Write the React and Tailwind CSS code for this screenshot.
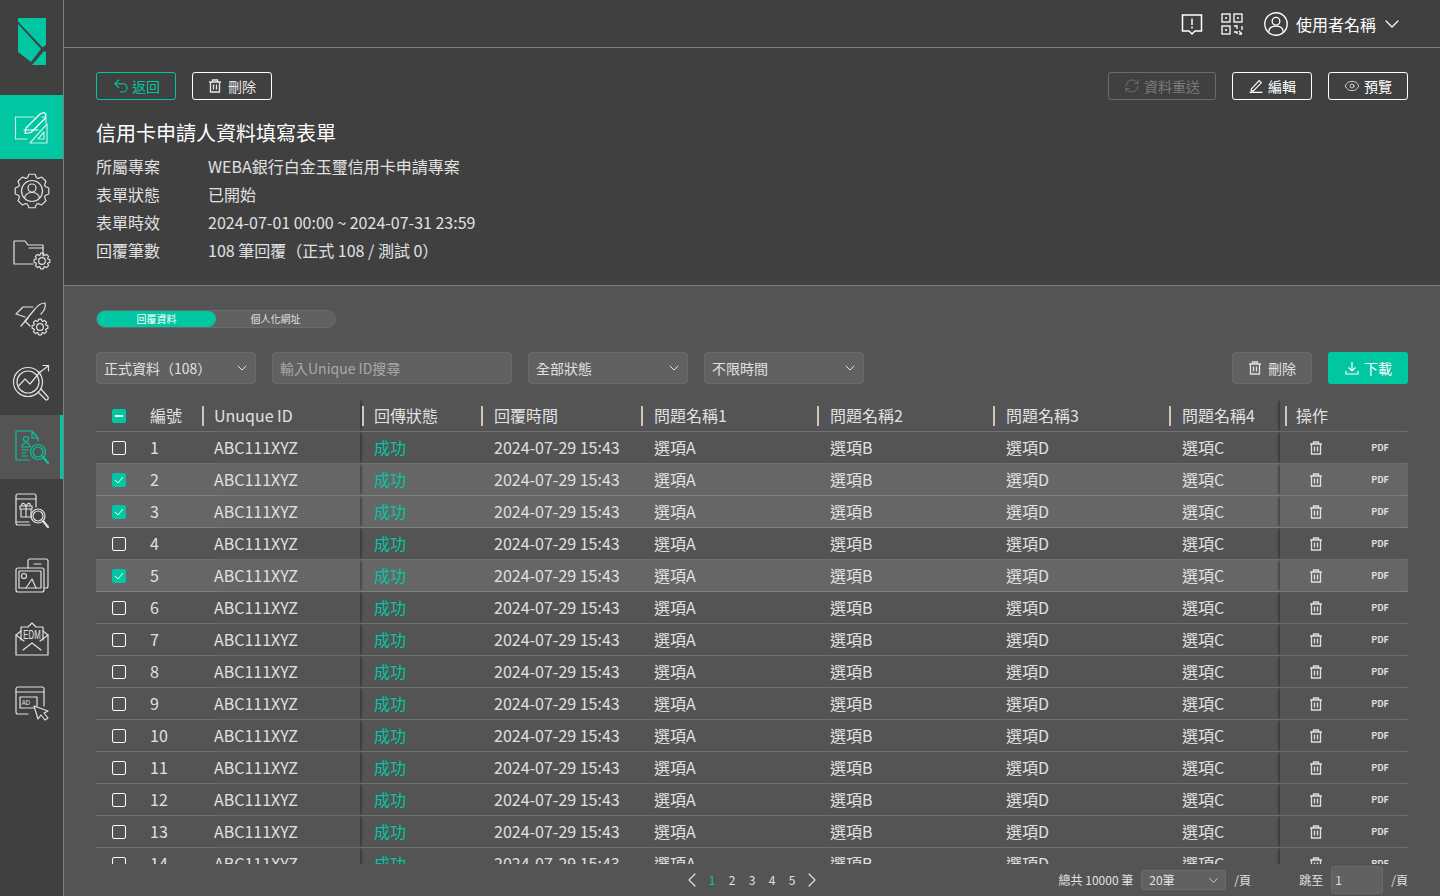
import React from 'react';
import { ChevronDown, ChevronLeft, ChevronRight, Eye, RefreshCw, Undo2 } from 'lucide-react';

const gearPath = (cx, cy, r1, r2, teeth) => {
  const pts = [];
  const step = (Math.PI * 2) / teeth;
  for (let i = 0; i < teeth; i++) {
    const a = i * step - Math.PI / 2;
    [[-0.3, r2], [-0.16, r1], [0.16, r1], [0.3, r2]].forEach(([o, r]) => {
      pts.push(`${(cx + Math.cos(a + o * step * 1.4) * r).toFixed(2)} ${(cy + Math.sin(a + o * step * 1.4) * r).toFixed(2)}`);
    });
  }
  return `M${pts.join('L')}Z`;
};

const Gear = ({ x, y, r }) => (
  <>
    <path d={gearPath(x, y, r, r * 0.78, 8)} />
    <circle cx={x} cy={y} r={r * 0.42} />
  </>
);

const navIcons = [
  <>
    <path d="M34 22H15.5V44H27M46 28V22H42" opacity=".75" />
    <path d="M24 35H38" />
    <path d="M26 33l14-14 4-1.5 2 2-1 4-14 14-6 1z" />
    <path d="M30 48 47 29V48Z" opacity=".75" />
    <path d="M38 44 44 37V44Z" opacity=".75" />
  </>,
  <>
    <path d={gearPath(32, 32, 17, 14, 8)} />
    <circle cx="32" cy="32" r="10.5" />
    <circle cx="32" cy="29" r="4" />
    <path d="M24.5 39c1-4 4-5.5 7.5-5.500s6.500 1.500 7.500 5.500" />
  </>,
  <>
    <path d="M33 41H14V18H25L28 22H43V33" />
    <path d="M29 25H43" />
    <Gear x={42} y={38} r={8} />
  </>,
  <>
    <path d="M30 39 25 34 35 22C38 18 42 16 45 16 46 20 44 24 41 27" />
    <path d="M33 20H23L16 27 25 30" />
    <path d="M21 39 28 31" />
    <Gear x={40} y={40} r={8} />
  </>,
  <>
    <circle cx="28" cy="31" r="14.500" />
    <circle cx="28" cy="31" r="11" />
    <path d="M18.500 35 25 28 30 33 40 21" />
    <path d="M38 41 46 49a2 2 0 0 0 2-3L41 38" />
    <path d="M39 22 48 15M43 14.500H48.500V20" />
  </>,
  <>
    <path d="M29 45H16V16H32L38 23V26M32 16V23H38" />
    <circle cx="26" cy="24" r="2.500" />
    <path d="M22 32c0-3 2-4 4-4s4 1 4 4z" />
    <path d="M22 35H28M22 38H26M22 41H27" />
    <circle cx="38" cy="37" r="7.500" />
    <circle cx="38" cy="37" r="5" />
    <path d="M43 42 48 48" strokeWidth="2.200" />
  </>,
  <>
    <path d="M30 46H18a2 2 0 0 1-2-2V17a2 2 0 0 1 2-2H34a2 2 0 0 1 2 2V28" />
    <path d="M16 20H36M16 43H29" />
    <path d="M21 30H31V38H21ZM20 27H32V30H20ZM26 27V38M26 27C24 23 21 24 22 27M26 27C28 23 31 24 30 27" />
    <circle cx="38" cy="37" r="7" />
    <circle cx="38" cy="37" r="5" />
    <path d="M43 42 48 48" strokeWidth="2.200" />
  </>,
  <>
    <path d="M28 25V18a2 2 0 0 1 2-2H46a2 2 0 0 1 2 2V43a2 2 0 0 1-2 2H44" />
    <path d="M34 21H41" />
    <rect x="16" y="25" width="28" height="24" rx="2" />
    <rect x="19" y="28" width="22" height="17" />
    <circle cx="24" cy="33" r="2.500" />
    <path d="M26 45 32 36 36 45" />
  </>,
  <>
    <path d="M16 28V48H48V28L43 24M21 24 16 28" />
    <path d="M16 28 24 34M48 28 40 34M23 43 32 36 41 43" />
    <path d="M21 33V20H28L32 16 36 20H43V33" />
    <text x="32" y="32.500" textAnchor="middle" fontSize="12" stroke="none" fill="currentColor" transform="translate(11.200 0) scale(.65 1)" style={{ fontFamily: '"Liberation Sans", sans-serif' }}>EDM</text>
  </>,
  <>
    <path d="M28 43H18a2 2 0 0 1-2-2V18a2 2 0 0 1 2-2H42a2 2 0 0 1 2 2V35" />
    <path d="M16 21H44" />
    <rect x="20" y="26" width="17" height="11" />
    <text x="26" y="34.500" textAnchor="middle" fontSize="8" stroke="none" fill="currentColor" transform="translate(6.500 0) scale(.75 1)" style={{ fontFamily: '"Liberation Sans", sans-serif' }}>AD</text>
    <path d="M34 35 48 40 44 42 48 47 45 49 41 44 38 48Z" fill="#404040" />
  </>,
];

const Trash = ({ size = 14 }) => (
  <svg width={size} height={size} viewBox="0 0 14 14" fill="none" stroke="currentColor" strokeWidth="1.300">
    <path d="M1 3H13M4.500 3V1H9.500V3M2.500 3V13H11.500V3M5.500 5.500V10.500M8.500 5.500V10.500" />
  </svg>
);

const Btn = ({ className, children }) => (
  <div className={`h-7 flex items-center justify-center rounded-[3px] border text-sm ${className}`}>{children}</div>
);

const Select = ({ label, className }) => (
  <div className={`h-8 flex items-center justify-between pl-[7px] pr-[5px] rounded-[3px] border border-[#6b6b6b] bg-[#616161] text-sm text-[#e0e0e0] ${className}`}>
    <span>{label}</span>
    <ChevronDown size={16} strokeWidth={1.5} />
  </div>
);

const gridCols = 'grid grid-cols-[54px_64px_146px_134px_160px_176px_176px_176px_98px_128px] items-center';

const headers = ['編號', 'Unuque ID', '回傳狀態', '回覆時間', '問題名稱1', '問題名稱2', '問題名稱3', '問題名稱4', '操作'];
const rows = Array.from({ length: 14 }, (_, i) => i + 1);
const selected = [2, 3, 5];

export default function App() {
  return (
    <div className="flex h-[896px] w-[1440px] overflow-hidden bg-[#545454] text-[#e0e0e0]" style={{ fontFamily: '"Noto Sans CJK TC", "Noto Sans", sans-serif' }}>
      <aside className="w-16 shrink-0 bg-[#404040] border-r border-[#808080]">
        <div className="h-[95px]">
          <svg width="63" height="95" viewBox="0 0 63 95" fill="#00c7a2">
            <path d="M18 18H46V45L42.500 47.500 18 21.500Z" />
            <path d="M18 24 41 49 31 62 18 52Z" />
            <path d="M44 51 46 52V65H32Z" />
          </svg>
        </div>
        {navIcons.map((icon, i) => (
          <div
            key={i}
            className={`relative h-16 ${i === 0 ? 'bg-[#00c7a2] text-white' : i === 5 ? 'bg-[#545454] text-[#00c7a2]' : 'text-[#e0e0e0]'}`}
          >
            <svg width="64" height="64" viewBox="0 0 64 64" fill="none" stroke="currentColor" strokeWidth="1.200" strokeLinejoin="round" strokeLinecap="round">
              {icon}
            </svg>
            {i === 5 && <div className="absolute right-0 top-0 bottom-0 w-[3px] bg-[#00c7a2]" />}
          </div>
        ))}
      </aside>

      <main className="flex-1 flex flex-col min-w-0">
        <header className="h-12 shrink-0 bg-[#404040] border-b border-[#808080] flex items-center justify-end pr-9">
          <svg width="22" height="24" viewBox="0 0 22 24" fill="none" stroke="white" strokeWidth="1.500" className="mr-[18px]">
            <path d="M1.500 3H20.500V19H14L11 22 8 19H1.500Z" />
            <path d="M11 6.500V13M11 14.500V16.500" />
          </svg>
          <svg width="22" height="22" viewBox="0 0 22 22" fill="none" stroke="white" strokeWidth="1.300" className="mr-[21px]">
            <rect x="1" y="1" width="8" height="8" />
            <rect x="13" y="1" width="8" height="8" />
            <rect x="1" y="13" width="8" height="8" />
            <path d="M4 5H6M16 5H18M4 17H6M13 13H16V16M21 13V17M13 19H16V21M18 18 21 21M18 21H21" />
          </svg>
          <svg width="24" height="24" viewBox="0 0 22 22" fill="none" stroke="white" strokeWidth="1.200" className="mr-[8px]">
            <circle cx="11" cy="11" r="10.300" />
            <circle cx="11" cy="8.500" r="3.500" />
            <path d="M4.500 18c0-3.500 2.500-5 6.500-5s6.500 1.500 6.500 5" />
          </svg>
          <span className="text-base text-white">使用者名稱</span>
          <ChevronDown size={24} strokeWidth={1.2} className="ml-1 text-white" />
        </header>

        <section className="h-[238px] shrink-0 bg-[#404040] border-b border-[#808080] pt-6 px-8">
          <div className="flex gap-4">
            <Btn className="w-20 gap-0.5 border-[#00c7a2] text-[#00c7a2]"><Undo2 size={18} strokeWidth={1.5} />返回</Btn>
            <Btn className="w-20 gap-1.5 border-white text-[#e6e6e6]"><Trash />刪除</Btn>
            <div className="flex-1" />
            <Btn className="w-[108px] gap-1 border-[#6b6b6b] text-[#7a7a7a]"><RefreshCw size={16} strokeWidth={1.2} />資料重送</Btn>
            <Btn className="w-20 gap-1 border-white text-white">
              <svg width="16" height="16" viewBox="0 0 15 15" fill="none" stroke="currentColor" strokeWidth="1.100"><path d="M1.500 13.500H13.500M3 10.500 10.500 2.500 12.500 4.500 5 12H3Z" /></svg>
              編輯
            </Btn>
            <Btn className="w-20 gap-1 border-white text-white"><Eye size={16} strokeWidth={1.1} />預覽</Btn>
          </div>
          <h1 className="mt-[19px] text-xl leading-7 font-normal text-white">信用卡申請人資料填寫表單</h1>
          <dl className="mt-[5px] text-base leading-7">
            {[
              ['所屬專案', 'WEBA銀行白金玉璽信用卡申請專案'],
              ['表單狀態', '已開始'],
              ['表單時效', '2024-07-01 00:00 ~ 2024-07-31 23:59'],
              ['回覆筆數', '108 筆回覆（正式 108 / 測試 0）'],
            ].map(([k, v]) => (
              <div key={k} className="flex">
                <dt className="w-28">{k}</dt>
                <dd>{v}</dd>
              </div>
            ))}
          </dl>
        </section>

        <section className="flex-1 min-h-0 flex flex-col px-8 pt-6">
          <div className="flex h-[18px] w-60 shrink-0 rounded-full bg-[#616161] border border-[#6b6b6b] text-[10px] leading-none">
            <div className="w-[119px] rounded-full bg-[#00c7a2] flex items-center justify-center text-white">回覆資料</div>
            <div className="flex-1 flex items-center justify-center">個人化網址</div>
          </div>

          <div className="mt-6 flex shrink-0 gap-4">
            <Select label="正式資料（108）" className="w-40" />
            <div className="h-8 w-60 flex items-center pl-[7px] rounded-[3px] border border-[#6b6b6b] bg-[#616161] text-sm text-[#a8a8a8]">輸入Unique ID搜尋</div>
            <Select label="全部狀態" className="w-40" />
            <Select label="不限時間" className="w-40" />
            <div className="flex-1" />
            <div className="h-8 w-20 flex items-center justify-center gap-1.5 rounded-[3px] border border-[#6b6b6b] bg-[#616161] text-sm"><Trash />刪除</div>
            <div className="h-8 w-20 flex items-center justify-center gap-1 rounded-[3px] bg-[#00c7a2] text-sm text-white">
              <svg width="16" height="16" viewBox="0 0 16 16" fill="none" stroke="currentColor" strokeWidth="1.200"><path d="M8 2V10.500M4.500 7.500 8 11 11.500 7.500M2 11V14H14V11" /></svg>
              下載
            </div>
          </div>

          <div className="mt-4 flex-1 min-h-0 overflow-hidden text-base leading-[22px]">
            <div className={`${gridCols} h-8 border-b border-[#707070]`}>
              <div className="pl-4">
                <div className="w-3.5 h-3.5 rounded-[2px] bg-[#00c7a2] flex items-center justify-center"><div className="w-2 h-0.5 bg-white" /></div>
              </div>
              {headers.map((h, i) => (
                <div
                  key={h}
                  className={`relative h-full pb-0.5 flex items-center ${i === 1 ? 'shadow-[3px_0_2px_-1px_rgba(0,0,0,0.3)]' : ''} ${i === 8 ? 'pl-4 shadow-[-3px_0_2px_-1px_rgba(0,0,0,0.3)]' : ''} ${i === 2 ? 'pl-[14px]' : ''}`}
                >
                  {h}
                  {i === 0 && <span className="absolute top-[6px] right-[10px] w-[2px] h-5 bg-[#c8c8c8]" />}
                  {i >= 2 && i < 7 && <span className="absolute top-[6px] right-[11px] w-[2px] h-5 bg-[#c8c8c8]" />}
                  {i === 2 && <span className="absolute top-[6px] left-[2px] w-[2px] h-5 bg-[#c8c8c8]" />}
                  {i === 8 && <span className="absolute top-[6px] left-[5px] w-[2px] h-5 bg-[#c8c8c8]" />}
                </div>
              ))}
            </div>
            {rows.map((n) => {
              const on = selected.includes(n);
              return (
                <div key={n} className={`${gridCols} h-8 border-b ${on ? 'bg-[#666666] border-[#808080]' : 'border-[#707070]'}`}>
                  <div className="pl-4">
                    {on ? (
                      <div className="w-3.5 h-3.5 rounded-[2px] bg-[#00c7a2] flex items-center justify-center">
                        <svg width="10" height="10" viewBox="0 0 10 10" fill="none" stroke="white" strokeWidth="1"><path d="M1 5 4 8 9 2" /></svg>
                      </div>
                    ) : (
                      <div className="w-3.5 h-3.5 rounded-[2px] border border-white" />
                    )}
                  </div>
                  <div className="mb-0.5">{n}</div>
                  <div className="h-full pb-0.5 flex items-center shadow-[3px_0_2px_-1px_rgba(0,0,0,0.3)]">ABC111XYZ</div>
                  <div className="mb-0.5 pl-[14px] text-[#00c7a2]">成功</div>
                  <div className="mb-0.5">2024-07-29 15:43</div>
                  <div className="mb-0.5">選項A</div>
                  <div className="mb-0.5">選項B</div>
                  <div className="mb-0.5">選項D</div>
                  <div className="mb-0.5">選項C</div>
                  <div className="h-full flex items-center pl-4 shadow-[-3px_0_2px_-1px_rgba(0,0,0,0.3)]">
                    <span className="w-10 flex justify-center"><Trash size={14} /></span>
                    <span className="ml-6 w-10 text-center text-[9px] font-bold leading-none">PDF</span>
                  </div>
                </div>
              );
            })}
          </div>

          <footer className="h-8 shrink-0 flex items-center text-xs relative">
            <div className="flex items-center ml-[584px] w-[144px]">
              <ChevronLeft size={24} strokeWidth={1.2} className="-mr-0.5" />
              <span className="w-5 text-center text-[#00c7a2]">1</span>
              <span className="w-5 text-center">2</span>
              <span className="w-5 text-center">3</span>
              <span className="w-5 text-center">4</span>
              <span className="w-5 text-center">5</span>
              <ChevronRight size={24} strokeWidth={1.2} className="-ml-0.5" />
            </div>
            <div className="flex-1" />
            <span>總共 10000 筆</span>
            <div className="ml-2 h-5 w-[85px] flex items-center justify-between pl-[7px] pr-1 rounded-[3px] border border-[#6b6b6b] bg-[#616161]">
              <span>20筆</span>
              <ChevronDown size={15} strokeWidth={1.3} />
            </div>
            <span className="ml-2 w-[65px]">/頁</span>
            <span>跳至</span>
            <div className="ml-2 h-7 w-[52px] flex items-center px-[3px] rounded-[3px] border border-[#6b6b6b] bg-[#616161]">1</div>
            <span className="ml-2">/頁</span>
          </footer>
        </section>
      </main>
    </div>
  );
}
